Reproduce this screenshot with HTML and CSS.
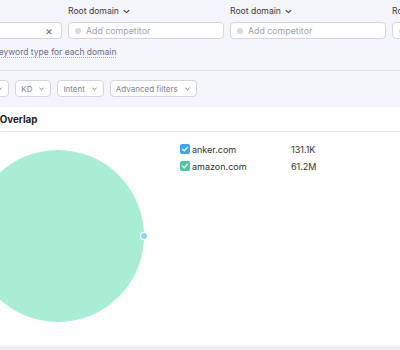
FILE: index.html
```html
<!DOCTYPE html>
<html>
<head>
<meta charset="utf-8">
<link rel="stylesheet" href="styles.css">
</head>
<body>
<div class="top">
  <div class="domains">
    <div class="dcol">
      <div class="dlabel">Root domain <svg class="chev" viewBox="0 0 8 5"><path d="M1.2 1.2l2.8 2.6 2.8-2.6"/></svg></div>
      <div class="dinput filled"><span class="x">×</span></div>
    </div>
    <div class="dcol">
      <div class="dlabel">Root domain <svg class="chev" viewBox="0 0 8 5"><path d="M1.2 1.2l2.8 2.6 2.8-2.6"/></svg></div>
      <div class="dinput"><span class="dot"></span><span class="ph">Add competitor</span></div>
    </div>
    <div class="dcol">
      <div class="dlabel">Root domain <svg class="chev" viewBox="0 0 8 5"><path d="M1.2 1.2l2.8 2.6 2.8-2.6"/></svg></div>
      <div class="dinput"><span class="dot"></span><span class="ph">Add competitor</span></div>
    </div>
    <div class="dcol">
      <div class="dlabel">Root domain <svg class="chev" viewBox="0 0 8 5"><path d="M1.2 1.2l2.8 2.6 2.8-2.6"/></svg></div>
      <div class="dinput"><span class="dot"></span><span class="ph">Add competitor</span></div>
    </div>
  </div>
  <div class="kwlink"><span>Choose keyword type for each domain</span></div>
</div>
<div class="filters">
  <div class="fbtn first">Volume <svg class="chev" viewBox="0 0 8 5"><path d="M1.2 1.2l2.8 2.6 2.8-2.6"/></svg></div>
  <div class="fbtn">KD <svg class="chev" viewBox="0 0 8 5"><path d="M1.2 1.2l2.8 2.6 2.8-2.6"/></svg></div>
  <div class="fbtn">Intent <svg class="chev" viewBox="0 0 8 5"><path d="M1.2 1.2l2.8 2.6 2.8-2.6"/></svg></div>
  <div class="fbtn">Advanced filters <svg class="chev" viewBox="0 0 8 5"><path d="M1.2 1.2l2.8 2.6 2.8-2.6"/></svg></div>
</div>
<div class="card">
  <div class="card-head"><span class="title">Keyword Overlap</span></div>
  <div class="card-body">
    <svg class="venn" width="180" height="213" viewBox="0 0 180 213">
      <circle cx="58" cy="104" r="86" fill="#aaedd5"/>
      <circle cx="144" cy="104" r="3.5" fill="#86d8ea" stroke="#ffffff" stroke-width="1.2"/>
    </svg>
    <div class="legend">
      <div class="lrow"><span class="cb blue"><svg viewBox="0 0 10 10"><path d="M2.6 5.2l1.7 1.6 3.2-3.4"/></svg></span><span class="lname">anker.com</span><span class="lval">131.1K</span></div>
      <div class="lrow"><span class="cb green"><svg viewBox="0 0 10 10"><path d="M2.6 5.2l1.7 1.6 3.2-3.4"/></svg></span><span class="lname">amazon.com</span><span class="lval">61.2M</span></div>
    </div>
  </div>
</div>
<div class="foot"></div>
</body>
</html>
```

FILE: styles.css
```css
html, body {
  margin: 0;
  padding: 0;
}
body {
  width: 400px;
  height: 350px;
  overflow: hidden;
  background: #f4f5f9;
  font-family: Inter, "Noto Sans", sans-serif;
  color: #333333;
  font-size: 9px;
}
.top {
  padding-top: 5px;
  padding-bottom: 12px;
  border-bottom: 1px solid #e2e3ea;
}
.domains {
  display: flex;
  gap: 6px;
  margin-left: -94px;
}
.dcol {
  width: 156px;
  flex: none;
}
.dlabel {
  height: 12px;
  line-height: 12px;
  font-size: 8.6px;
  color: #3a3a40;
  display: flex;
  align-items: center;
  gap: 4px;
}
.chev {
  width: 7px;
  height: 5px;
  fill: none;
  stroke: #444;
  stroke-width: 1.3;
  stroke-linecap: round;
  stroke-linejoin: round;
}
.dinput {
  margin-top: 5px;
  height: 15px;
  border: 1px solid #d4d5dd;
  border-radius: 4px;
  background: #fff;
  display: flex;
  align-items: center;
  padding: 0 6px;
  gap: 5px;
}
.dinput.filled {
  justify-content: flex-end;
  padding-right: 8px;
}
.x {
  color: #6d6f78;
  font-size: 12px;
  line-height: 12px;
}
.dot {
  width: 6px;
  height: 6px;
  border-radius: 50%;
  background: #d9dae1;
}
.ph {
  color: #a0a2ab;
  font-size: 8.8px;
}
.kwlink {
  margin-top: 7px;
  height: 12px;
  line-height: 12px;
  margin-left: -39px;
  font-size: 8.5px;
  color: #6b6c8c;
}
.kwlink span {
  border-bottom: 1px dotted #a3a4bd;
}
.filters {
  display: flex;
  gap: 6px;
  padding: 9px 0 10px 0;
  margin-left: -44px;
}
.fbtn {
  height: 15px;
  border: 1px solid #d4d5dd;
  border-radius: 4px;
  background: #fff;
  display: flex;
  align-items: center;
  gap: 7px;
  padding: 0 6px 0 5px;
  color: #80828d;
  font-size: 8px;
}
.fbtn .chev {
  width: 5px;
  height: 4px;
  stroke: #555;
}
.card {
  background: #fefefe;
  height: 239px;
}
.card-head {
  height: 24px;
  border-bottom: 1px solid #e4e5ea;
  display: flex;
  align-items: center;
  margin-left: -45px;
}
.title {
  font-weight: 700;
  font-size: 9.8px;
  color: #222;
}
.card-body {
  display: flex;
}
.venn {
  flex: none;
  display: block;
}
.legend {
  padding-top: 12px;
  display: flex;
  flex-direction: column;
  gap: 7px;
}
.lrow {
  display: flex;
  align-items: center;
  height: 10px;
  font-size: 9px;
  color: #333;
}
.cb {
  width: 10px;
  height: 10px;
  border-radius: 2px;
  display: flex;
  align-items: center;
  justify-content: center;
}
.cb svg {
  width: 10px;
  height: 10px;
  fill: none;
  stroke: #fff;
  stroke-width: 1.3;
  stroke-linecap: round;
  stroke-linejoin: round;
}
.cb.blue { background: #3fa5f3; }
.cb.green { background: #4ec89a; }
.lname {
  margin-left: 2px;
  width: 99px;
}
.lval {
  color: #333;
}
.foot {
  height: 4px;
  background: #eceef3;
}
```
